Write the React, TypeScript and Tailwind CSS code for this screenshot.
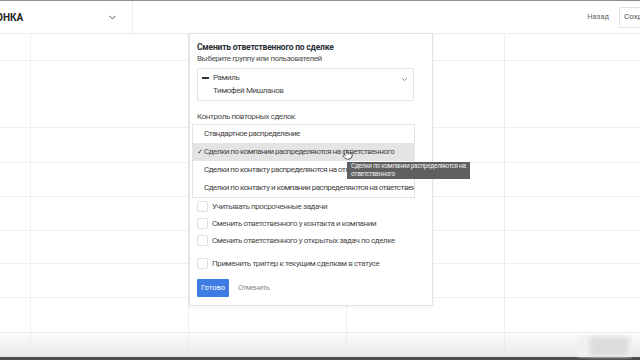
import React from "react";
import { ChevronDown, Pointer } from "lucide-react";

// row heights of the background board, written out so tailwind picks them up
const rows = [
  "h-[27px]",
  "h-[67px]",
  "h-[35px]",
  "h-[34px]",
  "h-[34px]",
  "h-[33px]",
  "h-[34px]",
  "h-[35px]",
  "h-[40px]",
];

const options = [
  "Стандартное распределение",
  "Сделки по компании распределяются на ответственного",
  "Сделки по контакту распределяются на ответственного",
  "Сделки по контакту и компании распределяются на ответственного",
];

const checks = [
  "Учитывать просроченные задачи",
  "Сменить ответственного у контакта и компании",
  "Сменить ответственного у открытых задач по сделке",
];

const Checkbox = ({ label, className = "" }: { label: string; className?: string }) => (
  <div className={"flex items-center h-[17px] gap-[4px] " + className}>
    <span className="w-[11px] h-[11px] rounded-[2px] border border-[#dedede] bg-white shrink-0" />
    <span className="text-[8px] text-[#4a4a4a] whitespace-nowrap">{label}</span>
  </div>
);

export default function App() {
  return (
    <div className="relative w-[640px] h-[360px] overflow-hidden bg-white font-['Roboto',sans-serif] text-[#333]">
      {/* top bar line */}
      <div className="h-px bg-[#8c8c8c]" />

      {/* header */}
      <header className="h-[33px] flex items-stretch border-b border-[#ececec]">
        <div className="w-[133px] flex items-center justify-between pr-[14px] border-r border-[#ececec]">
          <span className="text-[10px] font-bold text-[#222] -ml-[4px]">ОНКА</span>
          <ChevronDown size={11} strokeWidth={2} className="text-[#444]" />
        </div>
        <div className="flex-1" />
        <div className="flex items-center shrink-0 -mr-[40px]">
          <span className="text-[7.5px] text-[#666] mr-[10px]">Назад</span>
          <button className="h-[21px] px-[4px] border border-[#e4e4e4] text-[8px] text-[#555] whitespace-nowrap w-[61px] text-left">
            Сохранить
          </button>
        </div>
      </header>

      {/* board grid */}
      <div className="flex flex-col">
        {rows.map((h, i) => (
          <div key={i} className={"grid grid-cols-[31px_158px_158px_158px_1fr] " + h}>
            <div className="border-r border-b border-[#efefef]" />
            <div className="border-r border-b border-[#efefef]" />
            <div className="border-r border-b border-[#efefef]" />
            <div className="border-r border-b border-[#efefef]" />
            <div className="border-b border-[#efefef]" />
          </div>
        ))}
      </div>

      {/* bottom shading */}
      <div className="absolute left-0 right-0 bottom-[3px] h-[28px] bg-gradient-to-b from-transparent to-[#e8e8e8]" />
      <div className="absolute left-0 right-0 bottom-0 h-[3px] bg-[#4d4d4d]" />
      <div className="absolute left-[578px] top-[336px] w-[54px] h-[21px] bg-[#f1f1f1] blur-[1px]">
        <div className="ml-[12px] mt-[1px] w-[38px] h-[19px] bg-[#dcdcdc] blur-[2px]" />
      </div>

      {/* trigger settings popup */}
      <div className="absolute left-[189px] top-[33px] w-[244px] h-[273px] bg-white border border-[#e2e2e2] shadow-[0_1px_3px_rgba(0,0,0,0.06)] pl-[7px] pr-[18px] pt-[8px] tracking-[-0.4px]">
        <div className="text-[8.5px] leading-[11px] font-bold text-[#2b2f33] whitespace-nowrap tracking-[-0.2px]">
          Сменить ответственного по сделке
        </div>
        <div className="text-[8px] leading-[11px] text-[#4d4d4d] whitespace-nowrap">
          Выберите группу или пользователей
        </div>

        <div className="mt-[4px] w-[217px] h-[33px] border border-[#e3e3e3] rounded-[2px] pt-[3px] relative">
          <div className="flex items-center h-[12px]">
            <span className="ml-[4px] w-[7px] h-[2px] bg-[#333]" />
            <span className="ml-[4px] text-[8px] text-[#4a4a4a]">Рамиль</span>
          </div>
          <div className="mt-[1px] h-[12px] flex items-center pl-[15px] text-[8px] text-[#4a4a4a]">
            Тимофей Мишланов
          </div>
          <ChevronDown size={9} strokeWidth={2} className="absolute right-[4px] top-[6px] text-[#666]" />
        </div>

        <div className="mt-[10px] text-[8px] leading-[11px] text-[#4a4a4a]">Контроль повторных сделок</div>

        <div className="mt-[2px] -ml-[5px] w-[223px] border border-[#e3e3e3] overflow-hidden tracking-[-0.5px]">
          {options.map((o, i) => (
            <div
              key={o}
              className={
                "relative h-[18px] flex items-center pl-[11px] text-[8px] text-[#444] whitespace-nowrap " +
                (i === 1 ? "bg-[#e4e4e4]" : "")
              }
            >
              {i === 1 && <span className="absolute left-[4px] text-[7px] text-[#333]">✓</span>}
              {o}
            </div>
          ))}
        </div>

        <div>
          {checks.map((c) => (
            <Checkbox key={c} label={c} />
          ))}
          <Checkbox label="Применить триггер к текущим сделкам в статусе" className="mt-[6px]" />
        </div>

        <div className="mt-[7px] flex items-center gap-[9px]">
          <button className="h-[18px] w-[32px] bg-[#3e7be3] text-white text-[7.5px] rounded-[1px] tracking-normal">Готово</button>
          <span className="text-[7.5px] text-[#8c8c8c]">Отменить</span>
        </div>
      </div>

      {/* hover tooltip and pointer */}
      <div className="absolute left-[347px] top-[162px] w-[123px] h-[17px] bg-[#5f5f5f] px-[4px] pt-[1px] text-[6.5px] leading-[7.5px] text-[#f0f0f0] tracking-[-0.3px]">
        <div className="whitespace-nowrap">Сделки по компании распределяются на</div>
        <div className="whitespace-nowrap">ответственного</div>
      </div>
      <Pointer size={11} strokeWidth={1.6} className="absolute left-[342px] top-[149px] text-[#333] fill-white" />
    </div>
  );
}
